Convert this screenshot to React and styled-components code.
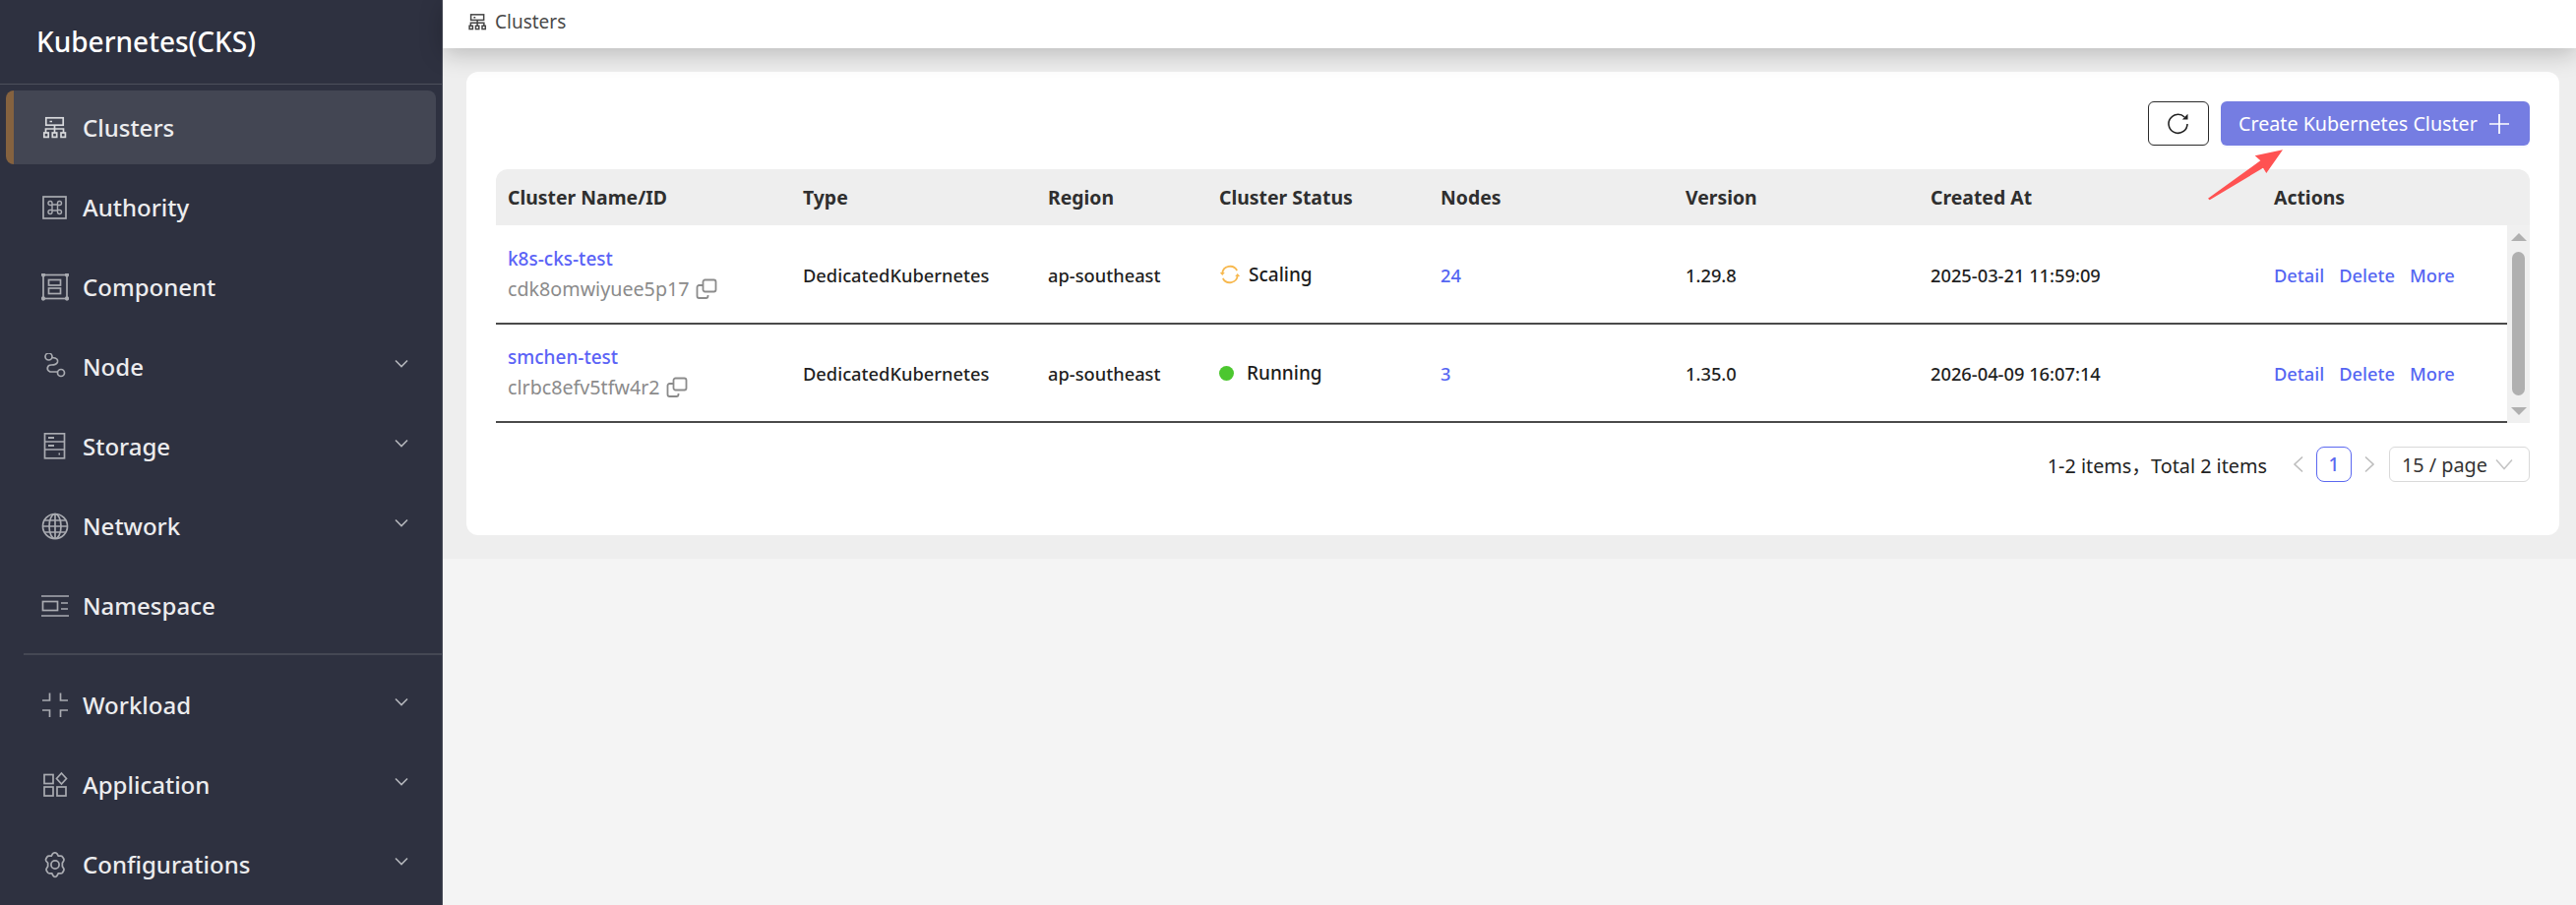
import React from 'react';
import styled, { createGlobalStyle } from 'styled-components';

const Global = createGlobalStyle`
  html, body { margin: 0; padding: 0; background: #f4f4f4; }
  body { font-family: "Noto Sans", "Noto Sans CJK SC", sans-serif; overflow: hidden; }
  * { box-sizing: border-box; }
`;

const Layout = styled.div`
  display: flex;
  width: 2618px;
  height: 920px;
  overflow: hidden;
`;

const Sidebar = styled.aside`
  width: 450px;
  flex: none;
  background: #2e3140;
  border-right: 1px solid #4a4d5a;
  display: flex;
  flex-direction: column;
`;

const Brand = styled.div`
  height: 86px;
  flex: none;
  padding: 0 0 2px 37px;
  display: flex;
  align-items: center;
  color: #fff;
  font-size: 28px;
  font-weight: 500;
  border-bottom: 1px solid #4d505c;
`;

const Menu = styled.nav`
  display: flex;
  flex-direction: column;
  gap: 6px;
  padding: 6px 6px 0;
`;

const MenuItem = styled.div`
  height: 75px;
  flex: none;
  display: flex;
  align-items: center;
  gap: 14px;
  padding: 0 28px 0 36px;
  border-radius: 8px;
  color: #ececee;
  font-size: 24px;
  font-weight: 500;
  background: ${p => (p.$active ? '#434653' : 'transparent')};
  border-left: ${p => (p.$active ? '8px solid #85623f' : 'none')};
  padding-left: ${p => (p.$active ? '28px' : '36px')};
  svg.icon { width: 28px; height: 28px; flex: none; }
`;

const Caret = styled.svg`
  width: 14px;
  height: 9px;
  margin-left: auto;
  margin-bottom: 6px;
`;

const MenuRule = styled.div`
  height: 2px;
  margin: 5px -6px 7px 18px;
  background: #454854;
`;

const Main = styled.main`
  flex: 1;
  min-width: 0;
  display: flex;
  flex-direction: column;
`;

const Topbar = styled.header`
  height: 49px;
  flex: none;
  background: #fff;
  display: flex;
  align-items: center;
  gap: 7px;
  padding: 0 0 5px 25px;
  font-size: 19px;
  color: #4a4a4a;
  box-shadow: 0 6px 24px rgba(0, 0, 0, 0.22);
  position: relative;
  z-index: 1;
  svg { width: 21px; height: 21px; }
`;

const Content = styled.section`
  background: #eeeeee;
  padding: 24px 17px 24px 24px;
`;

const Card = styled.div`
  position: relative;
  background: #fff;
  border-radius: 12px;
  padding: 30px 30px 54px;
`;

const Toolbar = styled.div`
  display: flex;
  justify-content: flex-end;
  gap: 12px;
  margin-bottom: 24px;
`;

const RefreshBtn = styled.button`
  width: 62px;
  height: 45px;
  background: #fff;
  border: 1px solid #2b2b2b;
  border-radius: 6px;
  padding: 0;
  display: flex;
  align-items: center;
  justify-content: center;
  box-shadow: 0 2px 0 rgba(0, 0, 0, 0.02);
`;

const PrimaryBtn = styled.button`
  width: 314px;
  height: 45px;
  border: 0;
  border-radius: 6px;
  background: #757de2;
  color: #fff;
  font-family: inherit;
  font-size: 19.7px;
  display: flex;
  align-items: center;
  justify-content: space-between;
  padding: 0 21px 0 18px;
  white-space: nowrap;
  box-shadow: 0 2px 0 rgba(90, 100, 255, 0.06);
  svg { flex: none; }
`;

const Annotation = styled.svg`
  position: absolute;
  left: 1770px;
  top: 79px;
  width: 80px;
  height: 54px;
`;

const cols = '300px 249px 174px 225px 249px 249px 349px 249px';

const HeadRow = styled.div`
  display: grid;
  grid-template-columns: ${cols} 23px;
  height: 57px;
  align-items: center;
  background: #eeeeee;
  border-radius: 12px 12px 0 0;
`;

const HeadCell = styled.div`
  padding-left: 12px;
  font-size: 19.4px;
  font-weight: 700;
  color: #2f2f2f;
`;

const BodyWrap = styled.div`
  display: flex;
`;

const Rows = styled.div`
  flex: 1;
  min-width: 0;
  padding-top: 1px;
`;

const Row = styled.div`
  display: grid;
  grid-template-columns: ${cols};
  height: 100px;
  align-items: center;
  border-bottom: 2px solid #4a4a4a;
`;

const Cell = styled.div`
  padding-left: 12px;
  font-size: 18.300px;
  font-weight: 500;
  color: #1f1f1f;
  white-space: nowrap;
`;

const LinkText = styled.span`
  color: #5566f2;
  font-size: 18.300px;
  font-weight: 500;
`;

const Name = styled.div`
  color: #5b63f6;
  font-size: 19px;
  font-weight: 500;
  line-height: 24px;
  margin-bottom: 5px;
`;

const IdLine = styled.div`
  display: flex;
  align-items: center;
  gap: 6px;
  color: #8b8b8b;
  font-size: 19.700px;
  font-weight: 400;
  line-height: 28px;
`;

const Status = styled.div`
  display: flex;
  align-items: center;
  gap: ${p => p.$gap}px;
  font-size: 19px;
  color: #1c1c1c;
`;

const Dot = styled.span`
  width: 15px;
  height: 15px;
  border-radius: 50%;
  background: #4cc72f;
`;

const Actions = styled.div`
  display: flex;
  gap: 15px;
`;

const Scrollbar = styled.div`
  width: 23px;
  flex: none;
  background: #f0f0f0;
  display: flex;
  flex-direction: column;
  align-items: center;
  padding: 8px 0 7px;
`;

const ScrollArrow = styled.span`
  width: 0;
  height: 0;
  border-left: 8px solid transparent;
  border-right: 8px solid transparent;
  ${p => p.$down
    ? 'border-top: 8px solid #b0b0b0;'
    : 'border-bottom: 8px solid #b0b0b0;'}
`;

const Thumb = styled.div`
  width: 13px;
  height: 146px;
  margin: 11px 0 12px;
  border-radius: 7px;
  background: #b0b0b0;
`;

const Pager = styled.div`
  display: flex;
  justify-content: flex-end;
  align-items: center;
  margin-top: 24px;
  height: 36px;
  font-size: 19.800px;
  color: #222;
`;

const PagerArrow = styled.svg`
  width: 12px;
  height: 18px;
  margin: ${p => p.$m};
`;

const PageBox = styled.div`
  width: 36px;
  height: 36px;
  border: 1px solid #5b68f0;
  border-radius: 8px;
  color: #5b68f0;
  font-size: 19px;
  font-weight: 500;
  display: flex;
  align-items: center;
  justify-content: center;
`;

const PageSize = styled.div`
  width: 143px;
  height: 36px;
  border: 1px solid #d9d9d9;
  border-radius: 6px;
  display: flex;
  align-items: center;
  justify-content: space-between;
  padding: 0 16px 0 12px;
  font-size: 19.800px;
  color: #333;
`;

const Rest = styled.div`
  flex: 1;
  background: #f4f4f4;
`;

const ic = { fill: 'none', stroke: '#a9abb1', strokeWidth: 1.7 };

const icons = {
  clusters: (
    <svg className="icon" viewBox="0 0 28 28" {...ic} stroke="#d8d9dc">
      <rect x="4.800" y="3.800" width="17.400" height="7.400" />
      <path d="M8.500 7.500h2.500M13.500 11v4M4.500 19v-4h18v4M13.500 15v4" />
      <rect x="2.800" y="19" width="4.400" height="4.400" />
      <rect x="11.300" y="19" width="4.400" height="4.400" />
      <rect x="20" y="19" width="4.400" height="4.400" />
    </svg>
  ),
  authority: (
    <svg className="icon" viewBox="0 0 28 28" {...ic}>
      <rect x="2" y="3" width="23" height="22" />
      <path d="M11 11h5.500v6H11zM11 11V9.500a2 2 0 1 0-2 2h2M16.500 11V9.500a2 2 0 1 1 2 2h-2M11 17v1.500a2 2 0 1 1-2-2h2M16.500 17v1.500a2 2 0 1 0 2-2h-2" strokeWidth="1.400" />
    </svg>
  ),
  component: (
    <svg className="icon" viewBox="0 0 28 28" {...ic}>
      <rect x="2" y="1.500" width="24" height="24" />
      <rect x="7.500" y="6.500" width="12" height="5.500" />
      <rect x="7.500" y="15" width="12" height="5.500" />
      <circle cx="2" cy="1.500" r="1.300" /><circle cx="26" cy="1.500" r="1.300" />
      <circle cx="2" cy="25.500" r="1.300" /><circle cx="26" cy="25.500" r="1.300" />
    </svg>
  ),
  node: (
    <svg className="icon" viewBox="0 0 28 28" {...ic}>
      <circle cx="7.500" cy="3.500" r="3.500" />
      <circle cx="20" cy="20" r="3.500" />
      <path d="M11 4.500c5 .5 6 2 5.500 4.500-.6 2.400-3 3-6.500 3-4 0-5.500 5 -1 7h8" />
    </svg>
  ),
  storage: (
    <svg className="icon" viewBox="0 0 28 28" {...ic}>
      <rect x="3.500" y=".8" width="20" height="25" />
      <path d="M3.500 9h20M3.500 17h20" />
      <path d="M7 5h6M7 13h6M17.500 21.500h1.500" strokeWidth="2" />
    </svg>
  ),
  network: (
    <svg className="icon" viewBox="0 0 28 28" {...ic}>
      <circle cx="14" cy="14" r="12.500" />
      <ellipse cx="14" cy="14" rx="6" ry="12.500" />
      <path d="M14 1.500v25M1.500 14h25M3.500 8h21M3.500 20h21" />
    </svg>
  ),
  namespace: (
    <svg className="icon" viewBox="0 0 28 28" {...ic}>
      <path d="M0 4h28M0 24h28M20 11h7M20 17h7" />
      <rect x="1.500" y="9.500" width="15" height="9" />
    </svg>
  ),
  workload: (
    <svg className="icon" viewBox="0 0 28 28" {...ic}>
      <path d="M1 9h7.500V1.500M19.500 1.500V9H27M1 19h7.500v7M19.500 26v-7H27" />
    </svg>
  ),
  application: (
    <svg className="icon" viewBox="0 0 28 28" {...ic}>
      <rect x="3" y="3.500" width="9" height="9" />
      <rect x="3" y="16" width="9" height="9" />
      <rect x="16" y="16" width="9" height="9" />
      <path d="M20.500 2l5 5.500-5 5.500-5-5.500z" />
    </svg>
  ),
  config: (
    <svg className="icon" viewBox="0 0 24 24" {...ic} strokeWidth="1.500">
      <path d="M12.200 1.500c.8 0 1.200.4 1.600 1.100l1 1.800 2-.1c.8 0 1.300.2 1.700.9l1 1.700c.4.700.3 1.300-.1 1.900L18.300 10.500v3l1.100 1.700c.4.600.5 1.200.1 1.900l-1 1.700c-.4.700-.9.900-1.700.9l-2-.1-1 1.800c-.4.700-.8 1.100-1.600 1.100h-.4c-.8 0-1.200-.4-1.600-1.100l-1-1.800-2 .1c-.8 0-1.300-.2-1.700-.9l-1-1.700c-.4-.7-.3-1.300.1-1.900l1.100-1.700v-3L4.200 8.800c-.4-.6-.5-1.200-.1-1.900l1-1.700c.4-.7.900-.9 1.700-.9l2 .1 1-1.800c.4-.7.800-1.100 1.600-1.100z" />
      <circle cx="12" cy="12" r="3.500" />
    </svg>
  ),
};

const menuTop = [
  { key: 'clusters', label: 'Clusters', active: true },
  { key: 'authority', label: 'Authority' },
  { key: 'component', label: 'Component' },
  { key: 'node', label: 'Node', caret: true },
  { key: 'storage', label: 'Storage', caret: true },
  { key: 'network', label: 'Network', caret: true },
  { key: 'namespace', label: 'Namespace' },
];

const menuBottom = [
  { key: 'workload', label: 'Workload', caret: true },
  { key: 'application', label: 'Application', caret: true },
  { key: 'config', label: 'Configurations', caret: true },
];

const clusters = [
  { name: 'k8s-cks-test', id: 'cdk8omwiyuee5p17', status: 'Scaling', nodes: 24, version: '1.29.8', created: '2025-03-21 11:59:09' },
  { name: 'smchen-test', id: 'clrbc8efv5tfw4r2', status: 'Running', nodes: 3, version: '1.35.0', created: '2026-04-09 16:07:14' },
];

const headers = ['Cluster Name/ID', 'Type', 'Region', 'Cluster Status', 'Nodes', 'Version', 'Created At', 'Actions'];

function NavEntry({ item }) {
  return (
    <MenuItem $active={item.active}>
      {icons[item.key]}
      <span>{item.label}</span>
      {item.caret && (
        <Caret viewBox="0 0 14 9" fill="none" stroke="#b4b6bb" strokeWidth="1.600">
          <path d="M1 1.500l6 6 6-6" />
        </Caret>
      )}
    </MenuItem>
  );
}

function CopyIcon() {
  return (
    <svg width="22" height="22" viewBox="0 0 22 22" fill="none" stroke="#8b8b8b" strokeWidth="1.800">
      <rect x="7.500" y="1.500" width="13" height="12" rx="2" />
      <path d="M7 7H3.500a2 2 0 0 0-2 2v9a2 2 0 0 0 2 2h7a2 2 0 0 0 2-2v-1" />
    </svg>
  );
}

function ScalingIcon() {
  return (
    <svg width="22" height="20" viewBox="0 0 22 20" fill="none" stroke="#f7b84e" strokeWidth="1.800">
      <path d="M3.200 9a8 8 0 0 1 15-3M18.800 11a8 8 0 0 1-15 3" />
      <path d="M.8 8h5l-2.500 3zM16.200 12h5l-2.500-3z" fill="#f7b84e" stroke="none" />
    </svg>
  );
}

export default function App() {
  return (
    <>
      <Global />
      <Layout>
        <Sidebar>
          <Brand>Kubernetes(CKS)</Brand>
          <Menu>
            {menuTop.map(item => <NavEntry key={item.key} item={item} />)}
            <MenuRule />
            {menuBottom.map(item => <NavEntry key={item.key} item={item} />)}
          </Menu>
        </Sidebar>
        <Main>
          <Topbar>
            <svg viewBox="0 0 28 28" fill="none" stroke="#444" strokeWidth="2">
              <rect x="4.800" y="3.800" width="17.400" height="7.400" />
              <path d="M8.500 7.500h2.500M13.500 11v4M4.500 19v-4h18v4M13.500 15v4" />
              <rect x="2.800" y="19" width="4.400" height="4.400" />
              <rect x="11.300" y="19" width="4.400" height="4.400" />
              <rect x="20" y="19" width="4.400" height="4.400" />
            </svg>
            Clusters
          </Topbar>
          <Content>
            <Card>
              <Toolbar>
                <RefreshBtn aria-label="refresh">
                  <svg width="24" height="24" viewBox="0 0 24 24" fill="none" stroke="#222" strokeWidth="1.600">
                    <path d="M21 12a9.500 9.500 0 1 1-2.900-7" />
                    <path d="M21.500 1.800v5.700h-5.700z" fill="#222" stroke="none" />
                  </svg>
                </RefreshBtn>
                <PrimaryBtn>
                  Create Kubernetes Cluster
                  <svg width="20" height="20" viewBox="0 0 20 20" stroke="#fff" strokeWidth="1.700">
                    <path d="M10 0v20M0 10h20" />
                  </svg>
                </PrimaryBtn>
              </Toolbar>
              <Annotation viewBox="0 0 80 54">
                <path d="M76 .3 L47.700 6.300 L53.300 11.300 L0 49.700 L1.700 51.300 L56 18.700 L59.300 24 Z" fill="#ff5252" />
              </Annotation>
              <HeadRow>
                {headers.map(h => <HeadCell key={h}>{h}</HeadCell>)}
                <span />
              </HeadRow>
              <BodyWrap>
                <Rows>
                  {clusters.map(c => (
                    <Row key={c.id}>
                      <Cell>
                        <Name>{c.name}</Name>
                        <IdLine>{c.id}<CopyIcon /></IdLine>
                      </Cell>
                      <Cell>DedicatedKubernetes</Cell>
                      <Cell>ap-southeast</Cell>
                      <Cell>
                        {c.status === 'Scaling'
                          ? <Status $gap={8}><ScalingIcon />{c.status}</Status>
                          : <Status $gap={13}><Dot />{c.status}</Status>}
                      </Cell>
                      <Cell><LinkText>{c.nodes}</LinkText></Cell>
                      <Cell>{c.version}</Cell>
                      <Cell>{c.created}</Cell>
                      <Cell>
                        <Actions>
                          <LinkText>Detail</LinkText>
                          <LinkText>Delete</LinkText>
                          <LinkText>More</LinkText>
                        </Actions>
                      </Cell>
                    </Row>
                  ))}
                </Rows>
                <Scrollbar>
                  <ScrollArrow />
                  <Thumb />
                  <ScrollArrow $down />
                </Scrollbar>
              </BodyWrap>
              <Pager>
                <span>1-2 items，Total 2 items</span>
                <PagerArrow $m="0 12px 0 26px" viewBox="0 0 12 18" fill="none" stroke="#bdbdbd" strokeWidth="1.600">
                  <path d="M10 1.500L2 9l8 7.500" />
                </PagerArrow>
                <PageBox>1</PageBox>
                <PagerArrow $m="0 14px 0 12px" viewBox="0 0 12 18" fill="none" stroke="#bdbdbd" strokeWidth="1.600">
                  <path d="M2 1.500L10 9l-8 7.500" />
                </PagerArrow>
                <PageSize>
                  15 / page
                  <svg width="18" height="12" viewBox="0 0 18 12" fill="none" stroke="#c4c4c4" strokeWidth="1.500">
                    <path d="M1 1.500l8 9 8-9" />
                  </svg>
                </PageSize>
              </Pager>
            </Card>
          </Content>
          <Rest />
        </Main>
      </Layout>
    </>
  );
}
